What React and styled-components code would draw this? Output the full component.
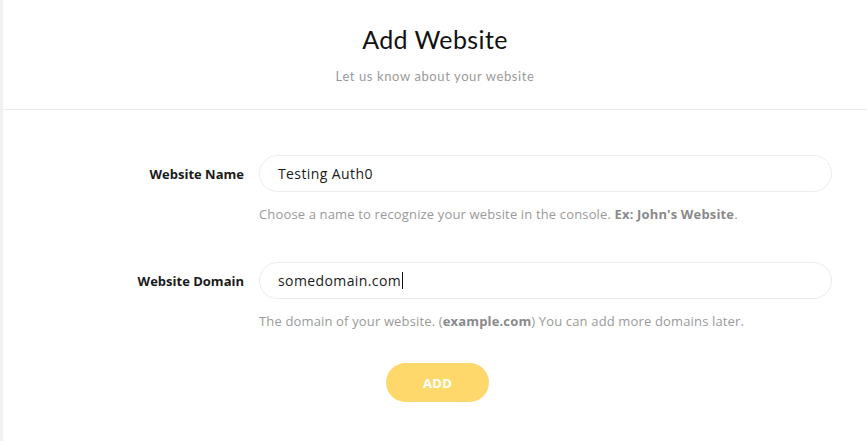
import React from 'react';
import styled, {createGlobalStyle} from 'styled-components';

const GlobalStyle = createGlobalStyle`
  html, body {
    margin: 0;
    padding: 0;
    background: #fff;
  }
  * {
    box-sizing: border-box;
  }
`;

const Page = styled.div`
  min-height: 100vh;
  border-left: 3px solid #f1f1f1;
  font-family: "Open Sans", Lato, sans-serif;
  color: #111;
`;

const Header = styled.header`
  height: 110px;
  border-bottom: 1px solid #ececec;
  display: flex;
  flex-direction: column;
  align-items: center;
  padding-top: 24px;
  font-family: Lato, sans-serif;
`;

const Title = styled.h1`
  margin: 0;
  font-size: 25px;
  font-weight: 400;
  letter-spacing: 0.4px;
  color: #111;
`;

const Subtitle = styled.p`
  margin: 14px 0 0;
  font-size: 13px;
  color: #9a9a9a;
  letter-spacing: 0.6px;
`;

const Form = styled.form`
  padding: 45px 35px 0 0;
  display: flex;
  flex-direction: column;
  gap: 39px;
`;

const Row = styled.div`
  display: grid;
  grid-template-columns: 241px 1fr;
  column-gap: 15px;
  row-gap: 13px;
  align-items: center;
`;

const Label = styled.label`
  text-align: right;
  font-size: 13px;
  font-weight: 700;
  color: #1a1a1a;
`;

const Input = styled.div`
  height: 37px;
  border: 1px solid #ececec;
  border-radius: 19px;
  padding: 0 18px;
  display: flex;
  align-items: center;
  font-size: 14px;
  letter-spacing: 0.4px;
  color: #1a1a1a;
`;

const Caret = styled.span`
  display: inline-block;
  width: 1px;
  height: 17px;
  background: #111;
  margin-left: 1px;
`;

const Help = styled.p`
  grid-column: 2;
  margin: 0;
  font-size: 13px;
  letter-spacing: 0.15px;
  color: #9a9a9a;

  b {
    color: #8a8a8a;
  }
`;

const Actions = styled.div`
  display: flex;
  justify-content: center;
  padding-left: 40px;
  margin-top: -6px;
`;

const AddButton = styled.button`
  width: 103px;
  height: 39px;
  border: none;
  border-radius: 20px;
  background: #ffd86c;
  color: #fff;
  font-family: inherit;
  font-size: 13px;
  font-weight: 700;
  letter-spacing: 0.3px;
`;

const fields = [
  {
    label: 'Website Name',
    value: 'Testing Auth0',
    help: <>Choose a name to recognize your website in the console. <b>Ex: John's Website</b>.</>,
  },
  {
    label: 'Website Domain',
    value: 'somedomain.com',
    caret: true,
    help: <>The domain of your website. (<b>example.com</b>) You can add more domains later.</>,
  },
];

const App = () => (
  <>
    <GlobalStyle />
    <Page>
      <Header>
        <Title>Add Website</Title>
        <Subtitle>Let us know about your website</Subtitle>
      </Header>
      <Form onSubmit={(e) => e.preventDefault()}>
        {fields.map((f) => (
          <Row key={f.label}>
            <Label>{f.label}</Label>
            <Input>
              {f.value}
              {f.caret && <Caret />}
            </Input>
            <Help>{f.help}</Help>
          </Row>
        ))}
        <Actions>
          <AddButton type="submit">ADD</AddButton>
        </Actions>
      </Form>
    </Page>
  </>
);

export default App;
